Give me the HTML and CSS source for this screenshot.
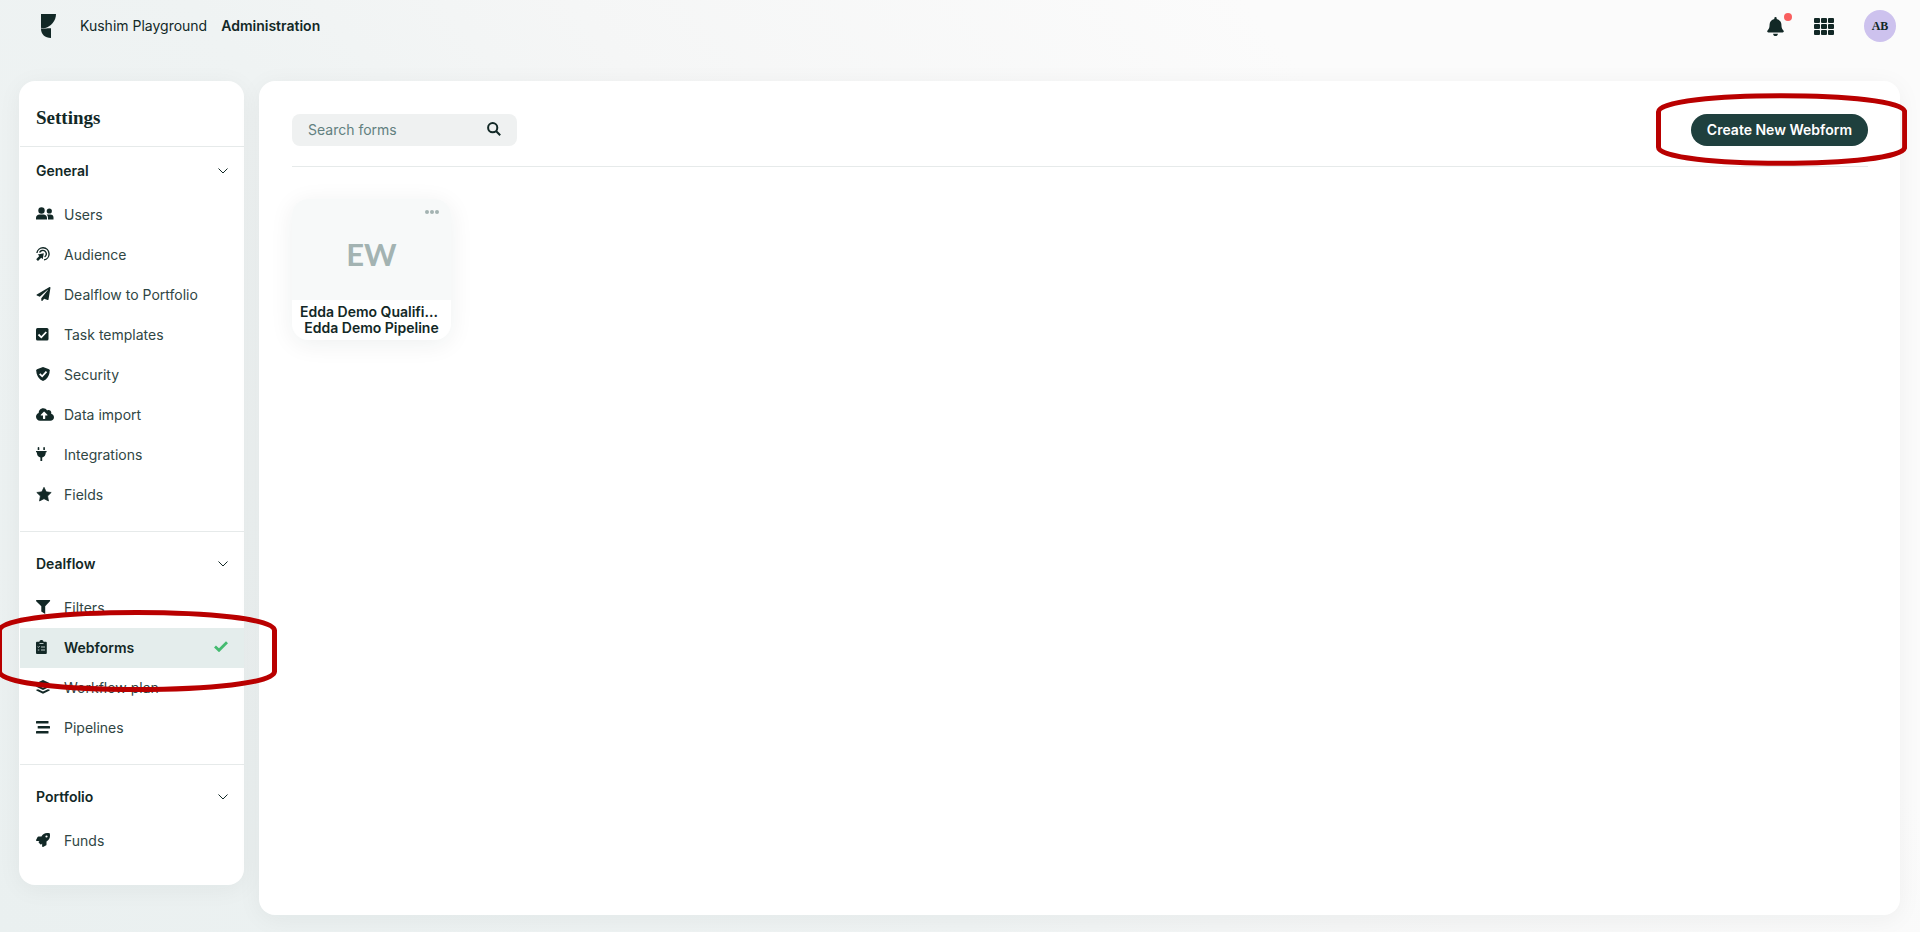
FILE: index.html
```html
<!DOCTYPE html>
<html lang="en">
<head>
<meta charset="utf-8">
<title>Administration - Webforms</title>
<link rel="stylesheet" href="styles.css">
</head>
<body>
<header class="topbar">
  <a class="logo" href="#" aria-label="Home"><svg width="15" height="24" viewBox="0 0 15 24"><path d="M0 0h15c0 7-5 12.500-11 14.200h6V24C4 24 0 20 0 15z"/><path d="M0 14.300c4 1 7-.5 9-2.300" fill="none" stroke="#eff3f4" stroke-width=".5"/></svg></a>
  <nav class="crumbs" aria-label="Main">
    <a href="#">Kushim Playground</a>
    <a class="current" href="#">Administration</a>
  </nav>
  <div class="tools">
    <button class="tool bell" aria-label="Notifications"><svg width="17" height="19" viewBox="0 0 448 512"><path d="M224 512c35 0 64-29 64-64H160c0 35 29 64 64 64zm215-150c-19-21-55-52-55-154 0-78-54-140-128-155V32a32 32 0 1 0-64 0v21C118 68 64 130 64 208c0 102-36 133-55 154-6 6-9 14-9 22 0 16 13 32 32 32h384c19 0 32-16 32-32 0-8-3-16-9-22z"/></svg><span class="dot"></span></button>
    <button class="tool" aria-label="Apps"><svg width="20" height="17" viewBox="0 0 20 17"><path d="M0 1q0-1 1-1h4q1 0 1 1v3q0 1-1 1H1q-1 0-1-1zM7 1q0-1 1-1h4q1 0 1 1v3q0 1-1 1H8q-1 0-1-1zM14 1q0-1 1-1h4q1 0 1 1v3q0 1-1 1h-4q-1 0-1-1zM0 7q0-1 1-1h4q1 0 1 1v3q0 1-1 1H1q-1 0-1-1zM7 7q0-1 1-1h4q1 0 1 1v3q0 1-1 1H8q-1 0-1-1zM14 7q0-1 1-1h4q1 0 1 1v3q0 1-1 1h-4q-1 0-1-1zM0 13q0-1 1-1h4q1 0 1 1v3q0 1-1 1H1q-1 0-1-1zM7 13q0-1 1-1h4q1 0 1 1v3q0 1-1 1H8q-1 0-1-1zM14 13q0-1 1-1h4q1 0 1 1v3q0 1-1 1h-4q-1 0-1-1z"/></svg></button>
    <button class="avatar">AB</button>
  </div>
</header>
<div class="layout">
  <aside class="sidebar">
    <h1 class="sidebar-title">Settings</h1>
    <section class="group">
      <h2 class="group-head"><button>General<svg width="10" height="6" viewBox="0 0 10 6"><path class="line" d="M.5.5 5 5 9.500.5"/></svg></button></h2>
      <ul>
        <li><a class="item" href="#"><span class="icon"><svg width="18" height="14" viewBox="0 0 18 14"><circle cx="5.500" cy="3.500" r="3.200"/><circle cx="13.300" cy="4" r="2.600"/><path d="M0 12.500V11c0-2.200 1.500-3.500 3.600-3.500h3.800C9.500 7.500 11 8.800 11 11v1.500zM12 12.500V11c0-1.400-.5-2.600-1.300-3.400h3.600c2 0 3.200 1.200 3.200 3v1.900z"/></svg></span>Users</a></li>
        <li><a class="item" href="#"><span class="icon"><svg width="14" height="14" viewBox="0 0 14 14"><g class="thick"><path d="M.9 6A6.100 6.100 0 1 1 8 12.900"/><path d="M3.600 5.500A3.500 3.500 0 1 1 8.600 9.900"/></g><path d="M7.800 6.200 6.700 12.200 5.200 10.800 2 14 .2 12.200 3.300 9 1.700 7.500z"/></svg></span>Audience</a></li>
        <li><a class="item" href="#"><span class="icon"><svg width="15" height="14" viewBox="0 0 512 512"><path d="M476 3 12 271c-18 10-16 35 2 43l106 44L408 105c5-5 13 2 8 8L175 407v80c0 24 28 33 42 16l64-77 125 52c14 6 30-3 33-18l72-432c3-20-18-35-35-25z"/></svg></span>Dealflow to Portfolio</a></li>
        <li><a class="item" href="#"><span class="icon"><svg width="13" height="13" viewBox="0 0 13 13"><rect width="12.500" height="12.500" rx="1.500"/><path class="cut" d="m2.500 6.500 2.800 2.800L10.300 4"/></svg></span>Task templates</a></li>
        <li><a class="item" href="#"><span class="icon"><svg width="14" height="14" viewBox="0 0 14 14"><path d="M7 0l6 2.200q.7.300.7 1C13.700 8.500 11 12.500 7 14 3 12.500.3 8.500.3 3.200q0-.7.700-1z"/><path class="cut" d="m3.700 6.800 2.500 2.500 4.300-4.600"/></svg></span>Security</a></li>
        <li><a class="item" href="#"><span class="icon"><svg width="18" height="13" viewBox="0 0 640 448"><path d="M538 195c4-11 6-23 6-35 0-65-76-120-149-80C367 32 315 0 256 0c-92 0-164 77-160 168C40 188 0 241 0 304c0 80 64 144 144 144h368c71 0 128-57 128-128 0-62-44-114-102-125zM393 256h-65v112q0 16-16 16h-48q-16 0-16-16V256h-65c-14 0-21-17-11-27l105-105q11-11 22 0l105 105c10 10 3 27-11 27z"/></svg></span>Data import</a></li>
        <li><a class="item" href="#"><span class="icon"><svg width="11" height="14" viewBox="0 0 11 14"><path d="M1.700.7q0-.7.800-.7t.8.700V3H1.700zM7.300.7q0-.7.800-.7t.8.700V3H7.300zM0 4h10.600v1.200h-.8c0 2.700-1.200 4.600-3.600 5.300V14H4.400v-3.500C2 9.800.8 7.900.8 5.200H0z"/></svg></span>Integrations</a></li>
        <li><a class="item" href="#"><span class="icon"><svg width="16" height="15" viewBox="0 0 16 15"><path d="m8 .3 2.200 4.500 5 .7-3.600 3.500.9 5L8 11.700 3.500 14l.9-5L.8 5.500l5-.7z" stroke="#122826" stroke-linejoin="round" stroke-width=".7"/></svg></span>Fields</a></li>
      </ul>
    </section>
    <section class="group">
      <h2 class="group-head"><button>Dealflow<svg width="10" height="6" viewBox="0 0 10 6"><path class="line" d="M.5.5 5 5 9.500.5"/></svg></button></h2>
      <ul>
        <li><a class="item" href="#"><span class="icon"><svg width="15" height="14" viewBox="0 0 15 14"><path d="M.5 0h13.200q.8.500.2 1.200L9.200 6.200V14L5.300 11.500V6.200L.2 1.200Q-.2.500.5 0z"/></svg></span>Filters</a></li>
        <li><a class="item selected" href="#" aria-current="page"><span class="icon"><svg width="11" height="14" viewBox="0 0 11 14"><path d="M1 1.700h2.300a2.200 2.200 0 0 1 4.300 0h2.200q1 0 1 1V13q0 1-1 1H1q-1 0-1-1V2.700q0-1 1-1z"/><path d="M3.500 3.500h4M5 7h4M5 10h4M1.700 6.700l.7.700 1.200-1.300M1.800 10h1.500" fill="none" stroke="#e4edec" stroke-width=".8"/></svg></span>Webforms<svg class="check" width="14" height="11" viewBox="0 0 14 11"><path d="m1 5.500 4 3.800L13 1.300"/></svg></a><svg class="ring" viewBox="0 0 280 82" preserveAspectRatio="none" aria-hidden="true"><path d="M2.500 20.500C2.500-3.500 277.500-3.500 277.500 20.500V61.500C277.500 85.500 2.500 85.500 2.500 61.500z"/></svg></li>
        <li><a class="item" href="#"><span class="icon"><svg width="14" height="14" viewBox="0 0 14 14"><path d="M7 0l6.500 3v.8L7 6.700.5 3.800V3zM.3 6l1.800-.5L7 7.800l4.900-2.300 1.800.5v.7L7 9.900.3 6.700zM.3 9.700l1.800-.5L7 11.500l4.900-2.300 1.800.5v.7L7 13.700.3 10.400z"/></svg></span>Workflow plan</a></li>
        <li><a class="item" href="#"><span class="icon"><svg width="14" height="13" viewBox="0 0 14 13"><rect width="12.500" height="2.500" rx=".5"/><rect x="1.700" y="5" width="12.300" height="2.500" rx=".5"/><rect y="10" width="12.500" height="2.500" rx=".5"/></svg></span>Pipelines</a></li>
      </ul>
    </section>
    <section class="group">
      <h2 class="group-head"><button>Portfolio<svg width="10" height="6" viewBox="0 0 10 6"><path class="line" d="M.5.5 5 5 9.500.5"/></svg></button></h2>
      <ul>
        <li><a class="item" href="#"><span class="icon"><svg width="14" height="14" viewBox="0 0 512 512"><path fill-rule="evenodd" d="M505 19c-1-6-6-11-12-12-33-7-58-7-83-7-103 0-165 55-211 128H94c-16 0-35 12-42 26L3 253c-8 16 4 35 21 35h104l-23 23c-12 12-13 33 0 46l51 50c12 13 33 13 46 0l22-22v103c0 17 19 29 35 21l99-49c14-7 26-26 26-42V313c73-47 128-109 128-211 0-26 0-51-7-83zM384 168a40 40 0 1 1 0-80 40 40 0 0 1 0 80z"/></svg></span>Funds</a></li>
      </ul>
    </section>
  </aside>
  <main class="panel">
    <div class="toolbar">
      <form class="search" role="search">
        <input type="text" placeholder="Search forms" aria-label="Search forms">
        <button type="button" aria-label="Search"><svg width="14" height="14" viewBox="0 0 14 14"><circle cx="5.700" cy="5.700" r="4.600"/><path d="m9 9 4.200 4.200"/></svg></button>
      </form>
      <div class="action">
        <button class="create">Create New Webform</button>
        <svg class="ring" viewBox="0 0 251 72" preserveAspectRatio="none" aria-hidden="true"><path d="M2.500 18.500C2.500-2.500 248.500-2.500 248.500 18.500V53.500C248.500 74.500 2.500 74.500 2.500 53.500z"/></svg>
      </div>
    </div>
    <div class="cards">
      <article class="card">
        <div class="cover">
          <button class="more" aria-label="More options"><svg width="14" height="4" viewBox="0 0 14 4"><circle cx="2" cy="2" r="2"/><circle cx="7" cy="2" r="2"/><circle cx="12" cy="2" r="2"/></svg></button>
          <span class="initials">EW</span>
        </div>
        <div class="caption">
          <p class="name">Edda Demo Qualifi...</p>
          <p class="pipeline">Edda Demo Pipeline</p>
        </div>
      </article>
    </div>
  </main>
</div>
</body>
</html>
```

FILE: styles.css
```css
* {
  box-sizing: border-box;
}

body {
  margin: 0;
  min-height: 100vh;
  display: flex;
  flex-direction: column;
  font: 14px/20px Inter, "Liberation Sans", sans-serif;
  color: #122826;
  background: linear-gradient(50deg, #eaf0f0 0%, #eff3f3 36%, #f5f6f6 50%, #fbfbfb 75%);
  overflow-x: hidden;
}

h1, h2, p, ul {
  margin: 0;
  padding: 0;
}

ul {
  list-style: none;
}

a {
  color: inherit;
  text-decoration: none;
}

button {
  font: inherit;
  color: inherit;
  border: 0;
  padding: 0;
  background: none;
  cursor: pointer;
}

svg {
  display: block;
  flex: none;
  fill: #122826;
}

.topbar {
  display: flex;
  align-items: center;
  height: 52px;
  padding: 0 24px 0 41px;
}

.crumbs {
  display: flex;
  gap: 14px;
  margin-left: 24px;
}

.current {
  font-weight: 600;
}

.tools {
  display: flex;
  align-items: center;
  gap: 30px;
  margin-left: auto;
}

.bell {
  position: relative;
}

.dot {
  position: absolute;
  top: -4px;
  right: -8px;
  width: 8px;
  height: 8px;
  border-radius: 50%;
  background: #f95f5f;
}

.avatar {
  width: 32px;
  height: 32px;
  border-radius: 50%;
  background: #cdc2ee;
  font: bold 12px/32px "Liberation Serif", serif;
}

.layout {
  flex: 1;
  display: flex;
  align-items: flex-start;
  gap: 15px;
  padding: 29px 20px 17px 19px;
}

.sidebar,
.panel {
  border-radius: 16px;
  background: #fff;
  box-shadow: 0 4px 24px rgba(18, 40, 38, 0.05);
}

.sidebar {
  flex: none;
  width: 225px;
  padding: 0 0 8px 1px;
}

.sidebar-title {
  padding: 25px 16px 16px;
  font: bold 19px/24px "Liberation Serif", serif;
}

.group {
  padding: 8px 0 16px;
  border-top: 1px solid #e6eaea;
}

.sidebar-title + .group {
  padding-top: 0;
}

.group-head button {
  display: flex;
  align-items: center;
  justify-content: space-between;
  width: 100%;
  height: 48px;
  padding: 0 16px;
  font-size: 14px;
  font-weight: 600;
}

.line {
  fill: none;
  stroke: #122826;
}

.group li {
  position: relative;
}

.item {
  display: flex;
  align-items: center;
  height: 40px;
  padding: 0 16px;
  color: #304644;
}

.icon {
  width: 28px;
  padding-bottom: 2px;
}

.thick {
  fill: none;
  stroke: #122826;
  stroke-width: 1.4;
}

.cut {
  fill: none;
  stroke: #fff;
  stroke-width: 1.8;
}

.selected {
  background: #e4edec;
  color: #122826;
  font-weight: 600;
}

.check {
  margin-left: auto;
  margin-bottom: 3px;
  fill: none;
  stroke: #44bb70;
  stroke-width: 2.8;
}

.ring {
  position: absolute;
  z-index: 1;
  fill: none;
  stroke: #b90000;
  stroke-width: 5;
  pointer-events: none;
}

.group .ring {
  top: -18px;
  left: -23px;
  width: calc(100% + 56px);
  height: 82px;
}

.panel {
  flex: 1;
  align-self: stretch;
  min-width: 0;
  padding: 33px 32px 32px 33px;
}

.toolbar {
  display: flex;
  justify-content: space-between;
  padding-bottom: 20px;
  border-bottom: 1px solid #e6eaea;
}

.search {
  display: flex;
  align-items: center;
  width: 225px;
  height: 32px;
  padding: 0 16px;
  border-radius: 8px;
  background: #eff1f1;
}

.search input {
  flex: 1;
  min-width: 0;
  border: 0;
  padding: 0;
  outline: 0;
  background: none;
  font: inherit;
  color: inherit;
}

.search input::placeholder {
  color: #62807f;
  opacity: 1;
}

.search svg {
  margin-bottom: 2px;
  fill: none;
  stroke: #122826;
  stroke-width: 2;
}

.action {
  position: relative;
}

.action .ring {
  top: -21px;
  left: -35px;
  width: calc(100% + 74px);
  height: 73px;
}

.create {
  height: 32px;
  padding: 0 16px;
  border-radius: 16px;
  background: #1f403e;
  color: #fff;
  font-weight: 600;
}

.cards {
  display: flex;
  flex-wrap: wrap;
  gap: 24px;
  padding-top: 32px;
}

.card {
  width: 159px;
  border-radius: 16px;
  background: #fff;
  overflow: hidden;
  box-shadow: 0 4px 24px rgba(18, 40, 38, 0.07);
}

.cover {
  position: relative;
  display: flex;
  align-items: center;
  justify-content: center;
  height: 101px;
  padding-top: 8px;
  background: #f7f9f9;
}

.more {
  position: absolute;
  top: 11px;
  right: 12px;
}

.more svg {
  fill: #a3b3b2;
}

.initials {
  font: bold 31px/40px Lato, sans-serif;
  color: #a3b3b2;
}

.caption {
  padding: 4px 8px;
  font-weight: 600;
  line-height: 16px;
  text-align: center;
}

.name,
.pipeline {
  white-space: nowrap;
}

.name {
  text-align: left;
}
```
